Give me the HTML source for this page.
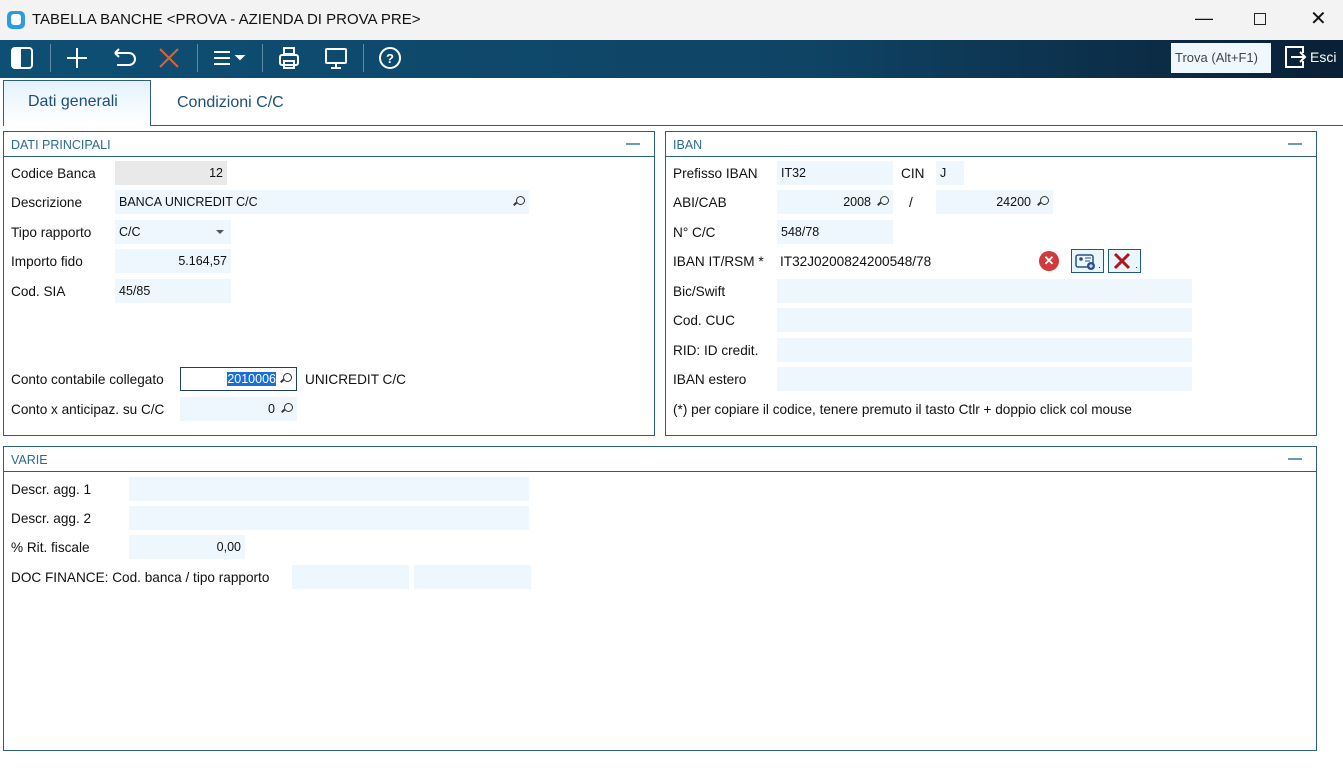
<!DOCTYPE html><html><head><style>
*{box-sizing:border-box;margin:0;padding:0}
body{width:1343px;height:772px;position:relative;background:#fff;font-family:"Liberation Sans",sans-serif;color:#111;overflow:hidden}
.a{position:absolute}
.lb{position:absolute;font-size:13.6px;white-space:nowrap}
.in{position:absolute;height:24px;background:#edf7fd;font-size:12.5px;line-height:24px;padding:0 4px;white-space:nowrap}
.r{text-align:right}
.pn{position:absolute;border:1px solid #2c5f7c}
.ph{position:absolute;left:0;right:0;top:0;height:25px;border-bottom:1px solid #2c5f7c;font-size:12.5px;color:#2a6a94;padding:6px 7px}
.mn{position:absolute;right:14px;top:11px;width:14px;height:2px;background:#6b9ab8}
.sep{position:absolute;top:44px;width:1px;height:28px;background:#5f8aa6}
.mag{position:absolute;right:4px;top:6px;width:9px;height:9px;border:1.5px solid #333;border-radius:50%}
.mag:after{content:"";position:absolute;left:-4px;top:6px;width:4px;height:1.5px;background:#333;transform:rotate(-45deg)}
</style></head><body>
<div class="a" style="left:0;top:0;width:1343px;height:40px;background:#f3f3f3"></div>
<div class="a" style="left:7px;top:11px;width:18px;height:18px;border-radius:5px;background:#2d9be0"></div>
<div class="a" style="left:11px;top:14px;width:10px;height:11px;border-radius:3px;background:#fff"></div>
<div class="lb" style="left:32px;top:11px;font-size:15px">TABELLA BANCHE &lt;PROVA - AZIENDA DI PROVA PRE&gt;</div>
<div class="lb" style="left:1195px;top:8px;font-size:18px">—</div>
<div class="a" style="left:1254px;top:13px;width:12px;height:12px;border:1.5px solid #222"></div>
<div class="lb" style="left:1310px;top:6px;font-size:20px">✕</div>
<div class="a" style="left:0;top:40px;width:1343px;height:38px;background:linear-gradient(90deg,#0e4f74,#0f4465 60%,#0a1f35)"></div>
<svg class="a" style="left:0;top:40px" width="420" height="38" fill="none" stroke="#fff" stroke-width="2">
<rect x="12" y="8" width="20" height="20" rx="3"/><rect x="13" y="9" width="7" height="18" fill="#fff"/>
<path d="M77 8v20M67 18h20"/>
<path d="M115 13h14a6 6 0 0 1 0 12h-12M115 13l4-4M115 13l4 4"/>
<path d="M160 9l18 18M178 9l-18 18" stroke="#e0622a"/>
<path d="M214 12h16M214 18h16M214 24h16"/><path d="M237 16l3 3 3-3z" fill="#fff"/>
<rect x="280" y="15" width="18" height="10" rx="2"/><rect x="284" y="8" width="10" height="6"/><rect x="284" y="21" width="10" height="7"/>
<rect x="326" y="9" width="20" height="14" rx="1"/><path d="M336 23v4M331 28h10"/>
<circle cx="390" cy="18" r="10"/>
<text x="390" y="23" fill="#fff" stroke="none" font-size="13" font-weight="bold" text-anchor="middle" font-family="Liberation Sans">?</text>
</svg>
<div class="sep" style="left:50px"></div><div class="sep" style="left:197px"></div><div class="sep" style="left:262px"></div><div class="sep" style="left:363px"></div>
<div class="in" style="left:1171px;top:43px;width:100px;height:30px;line-height:30px;font-size:13px;color:#444;background:#eef8fe">Trova (Alt+F1)</div>
<svg class="a" style="left:1283px;top:45px" width="24" height="24" fill="none" stroke="#fff" stroke-width="2"><path d="M9 2H3v20h6M9 2h11v6M20 16v6H9M8 12h14M17 7l5 5-5 5"/></svg>
<div class="lb" style="left:1310px;top:49px;color:#fff;font-size:14px">Esci</div>
<div class="a" style="left:3px;top:80px;width:148px;height:46px;border:1px solid #2c5f7c;border-bottom:none;background:linear-gradient(#e4f2fc,#fff)"></div>
<div class="a" style="left:151px;top:125px;width:1192px;height:1px;background:#2c5f7c"></div>
<div class="lb" style="left:28px;top:93px;font-size:16px;color:#1e4f78">Dati generali</div>
<div class="lb" style="left:177px;top:94px;font-size:16px;color:#1e4f78">Condizioni C/C</div>

<div class="pn" style="left:3px;top:131px;width:652px;height:305px"><div class="ph">DATI PRINCIPALI</div><div class="mn"></div></div>
<div class="lb" style="left:11px;top:166px">Codice Banca</div><div class="in r" style="left:115px;top:161px;width:112px;background:#e9e9e9">12</div>
<div class="lb" style="left:11px;top:195px">Descrizione</div><div class="in" style="left:115px;top:190px;width:414px">BANCA UNICREDIT C/C<span class="mag"></span></div>
<div class="lb" style="left:11px;top:225px">Tipo rapporto</div><div class="in" style="left:115px;top:220px;width:116px">C/C<span class="a" style="right:7px;top:10px;border:4px solid transparent;border-top:4px solid #555"></span></div>
<div class="lb" style="left:11px;top:254px">Importo fido</div><div class="in r" style="left:115px;top:249px;width:116px">5.164,57</div>
<div class="lb" style="left:11px;top:284px">Cod. SIA</div><div class="in" style="left:115px;top:279px;width:116px">45/85</div>
<div class="lb" style="left:11px;top:372px">Conto contabile collegato</div>
<div class="in r" style="left:180px;top:367px;width:117px;border:1px solid #1d3f5c;background:#fff;padding-right:20px;line-height:22px"><span style="background:#1a6ed6;color:#fff">2010006</span><span class="mag" style="top:5px"></span></div>
<div class="lb" style="left:305px;top:372px">UNICREDIT C/C</div>
<div class="lb" style="left:11px;top:402px">Conto x anticipaz. su C/C</div><div class="in r" style="left:180px;top:397px;width:117px;padding-right:22px">0<span class="mag"></span></div>

<div class="pn" style="left:665px;top:131px;width:652px;height:305px"><div class="ph">IBAN</div><div class="mn"></div></div>
<div class="lb" style="left:673px;top:166px">Prefisso IBAN</div><div class="in" style="left:777px;top:161px;width:116px">IT32</div>
<div class="lb" style="left:901px;top:166px">CIN</div><div class="in" style="left:936px;top:161px;width:28px">J</div>
<div class="lb" style="left:673px;top:195px">ABI/CAB</div><div class="in r" style="left:777px;top:190px;width:116px;padding-right:22px">2008<span class="mag"></span></div>
<div class="lb" style="left:909px;top:195px">/</div><div class="in r" style="left:936px;top:190px;width:117px;padding-right:22px">24200<span class="mag"></span></div>
<div class="lb" style="left:673px;top:225px">N° C/C</div><div class="in" style="left:777px;top:220px;width:116px">548/78</div>
<div class="lb" style="left:673px;top:254px">IBAN IT/RSM *</div><div class="lb" style="left:780px;top:254px">IT32J0200824200548/78</div>
<div class="a" style="left:1039px;top:251px;width:20px;height:20px;border-radius:50%;background:#d03a3a;color:#fff;font-size:13px;text-align:center;line-height:20px;font-weight:bold">✕</div>
<div class="a" style="left:1071px;top:249px;width:33px;height:24px;border:1px solid #1f5a78;background:#eaf5fc"><svg width="31" height="22"><rect x="4" y="5" width="17" height="12" rx="2" fill="none" stroke="#2b4f8a" stroke-width="1.5"/><circle cx="9" cy="9" r="1.8" fill="#2b4f8a"/><path d="M13 8h6M13 11h5" stroke="#2b4f8a"/><circle cx="19" cy="16" r="4" fill="#2b4f8a"/><path d="M17 16h4M19 14v4" stroke="#fff"/><rect x="27" y="17" width="1" height="1" fill="#333"/></svg></div>
<div class="a" style="left:1108px;top:249px;width:33px;height:24px;border:1px solid #1f5a78;background:#eaf5fc"><svg width="31" height="22"><path d="M6 4l14 14M20 4L6 18" stroke="#b3141b" stroke-width="3"/><rect x="27" y="17" width="1" height="1" fill="#333"/></svg></div>
<div class="lb" style="left:673px;top:284px">Bic/Swift</div><div class="in" style="left:777px;top:279px;width:415px"></div>
<div class="lb" style="left:673px;top:313px">Cod. CUC</div><div class="in" style="left:777px;top:308px;width:415px"></div>
<div class="lb" style="left:673px;top:343px">RID: ID credit.</div><div class="in" style="left:777px;top:338px;width:415px"></div>
<div class="lb" style="left:673px;top:372px">IBAN estero</div><div class="in" style="left:777px;top:367px;width:415px"></div>
<div class="lb" style="left:673px;top:402px">(*) per copiare il codice, tenere premuto il tasto Ctlr + doppio click col mouse</div>

<div class="pn" style="left:3px;top:446px;width:1314px;height:305px"><div class="ph">VARIE</div><div class="mn"></div></div>
<div class="lb" style="left:11px;top:482px">Descr. agg. 1</div><div class="in" style="left:129px;top:477px;width:400px"></div>
<div class="lb" style="left:11px;top:511px">Descr. agg. 2</div><div class="in" style="left:129px;top:506px;width:400px"></div>
<div class="lb" style="left:11px;top:540px">% Rit. fiscale</div><div class="in r" style="left:129px;top:535px;width:116px">0,00</div>
<div class="lb" style="left:11px;top:570px">DOC FINANCE: Cod. banca / tipo rapporto</div>
<div class="in" style="left:292px;top:565px;width:117px"></div><div class="in" style="left:414px;top:565px;width:117px"></div>
</body></html>
